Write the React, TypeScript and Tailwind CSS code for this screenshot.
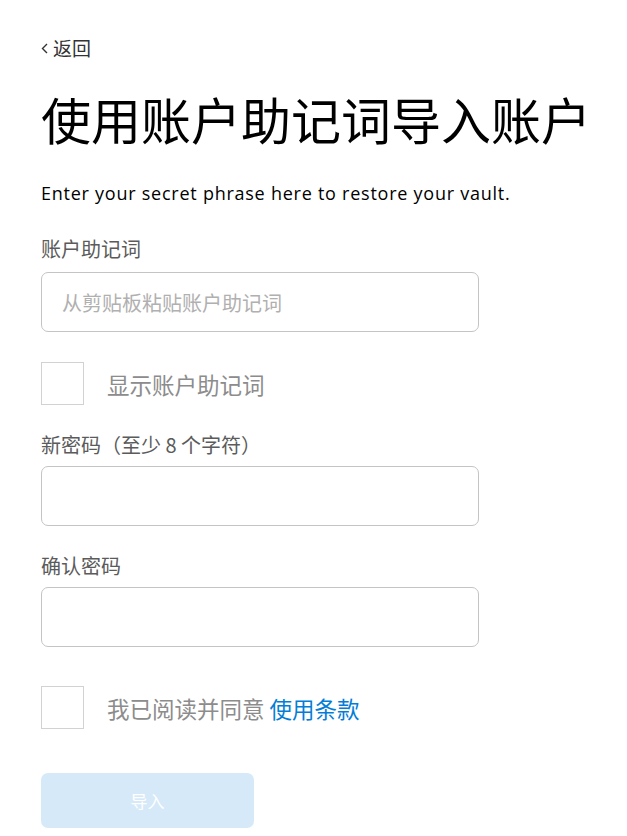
import { useState } from 'react';

const cjk = "font-['Noto_Sans_CJK_SC',sans-serif]";

function Field({ label }: { label: string }) {
  return (
    <div className="flex flex-col gap-[8px]">
      <label className={`${cjk} text-[20px] leading-[26px] text-[#5b5b5b]`}>{label}</label>
      <input
        type="password"
        className="h-[60px] w-[438px] rounded-[7px] border border-[#c4c4c4] bg-white px-[20px] outline-none"
      />
    </div>
  );
}

function Check({ children }: { children: React.ReactNode }) {
  const [on, setOn] = useState(false);
  return (
    <div className="flex items-center gap-[23px]">
      <button
        onClick={() => setOn(!on)}
        className="h-[43px] w-[43px] shrink-0 border border-[#d2d2d2] bg-white"
      />
      <span className={`${cjk} text-[22.5px] leading-[30px] text-[#8c8c8c]`}>{children}</span>
    </div>
  );
}

export default function App() {
  return (
    <div className="min-h-[836px] bg-white px-[41px] pt-[36px]">
      <a className={`${cjk} flex items-center gap-[5px] text-[19px] leading-[24px] text-[#333]`}>
        <svg width="7" height="11" viewBox="0 0 7 11" fill="none" className="mt-[1px]">
          <path d="M6 1L1.5 5.5L6 10" stroke="#333" strokeWidth="1.4" />
        </svg>
        返回
      </a>

      <h1 className={`${cjk} mt-[28px] whitespace-nowrap text-[50px] font-normal leading-[60px] text-black`}>
        使用账户助记词导入账户
      </h1>

      <p className="mt-[33px] font-['Open_Sans',sans-serif] text-[18px] leading-[24px] tracking-[0.75px] text-black">
        Enter your secret phrase here to restore your vault.
      </p>

      <div className="mt-[31px] flex flex-col gap-[10px]">
        <label className={`${cjk} text-[20px] leading-[26px] text-[#5b5b5b]`}>账户助记词</label>
        <input
          placeholder="从剪贴板粘贴账户助记词"
          className={`${cjk} h-[60px] w-[438px] rounded-[7px] border border-[#c4c4c4] bg-white px-[20px] text-[20px] text-[#333] outline-none placeholder:text-[#b0b0b0]`}
        />
      </div>

      <div className="mt-[30px]">
        <Check>显示账户助记词</Check>
      </div>

      <div className="mt-[27px]">
        <Field label="新密码（至少 8 个字符）" />
      </div>

      <div className="mt-[27px]">
        <Field label="确认密码" />
      </div>

      <div className="mt-[39px]">
        <Check>
          我已阅读并同意 <span className="text-[#037dd6]">使用条款</span>
        </Check>
      </div>

      <button
        disabled
        className={`${cjk} mt-[44px] h-[55px] w-[213px] rounded-[7px] bg-[#d6e9f8] text-[17px] text-white`}
      >
        导入
      </button>
    </div>
  );
}
